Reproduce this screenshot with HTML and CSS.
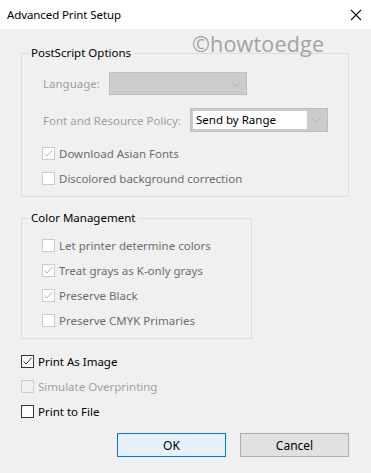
FILE: index.html
```html
<!DOCTYPE html>
<html lang="en">
<head>
  <meta charset="UTF-8">
  <title>Advanced Print Setup</title>
  <link rel="stylesheet" href="styles.css">
</head>
<body>
  <div class="dialog">
    <div class="titlebar">
      <span class="title">Advanced Print Setup</span>
      <svg class="close" width="12" height="12" viewBox="0 0 12 12">
        <path d="M1 1 L11 11 M11 1 L1 11" stroke="#111" stroke-width="1.1" fill="none"/>
      </svg>
    </div>
    <div class="content">
      <div class="watermark">©howtoedge</div>
      <fieldset class="group wide">
        <legend>PostScript Options</legend>
        <div class="field first">
          <span class="label">Language:</span>
          <div class="select empty">
            <span class="value"></span>
            <span class="arrow"><svg width="9" height="5" viewBox="0 0 9 5"><path d="M0.5 0.5 L4.5 4.5 L8.5 0.5" stroke="#b0b0b0" fill="none"/></svg></span>
          </div>
        </div>
        <div class="field policy">
          <span class="label">Font and Resource Policy:</span>
          <div class="select filled">
            <span class="value">Send by Range</span>
            <span class="arrow"><svg width="9" height="5" viewBox="0 0 9 5"><path d="M0.5 0.5 L4.5 4.5 L8.5 0.5" stroke="#b0b0b0" fill="none"/></svg></span>
          </div>
        </div>
        <div class="check-row disabled first-check">
          <span class="box checked"><svg width="11" height="11" viewBox="0 0 11 11"><path d="M1.5 5.5 L4 8 L9.5 2" stroke="#b5b5b5" fill="none"/></svg></span>
          <span>Download Asian Fonts</span>
        </div>
        <div class="check-row disabled">
          <span class="box"></span>
          <span>Discolored background correction</span>
        </div>
      </fieldset>

      <fieldset class="group narrow">
        <legend>Color Management</legend>
        <div class="check-row disabled">
          <span class="box"></span>
          <span>Let printer determine colors</span>
        </div>
        <div class="check-row disabled">
          <span class="box checked"><svg width="11" height="11" viewBox="0 0 11 11"><path d="M1.5 5.5 L4 8 L9.5 2" stroke="#b5b5b5" fill="none"/></svg></span>
          <span>Treat grays as K-only grays</span>
        </div>
        <div class="check-row disabled">
          <span class="box checked"><svg width="11" height="11" viewBox="0 0 11 11"><path d="M1.5 5.5 L4 8 L9.5 2" stroke="#b5b5b5" fill="none"/></svg></span>
          <span>Preserve Black</span>
        </div>
        <div class="check-row disabled">
          <span class="box"></span>
          <span>Preserve CMYK Primaries</span>
        </div>
      </fieldset>

      <div class="options">
        <div class="check-row">
          <span class="box checked"><svg width="11" height="11" viewBox="0 0 11 11"><path d="M1.5 5.5 L4 8 L9.5 2" stroke="#333" fill="none"/></svg></span>
          <span>Print As Image</span>
        </div>
        <div class="check-row off">
          <span class="box"></span>
          <span>Simulate Overprinting</span>
        </div>
        <div class="check-row">
          <span class="box"></span>
          <span>Print to File</span>
        </div>
      </div>

      <div class="buttons">
        <button class="btn default">OK</button>
        <button class="btn">Cancel</button>
      </div>
    </div>
  </div>
</body>
</html>
```

FILE: styles.css
```css
html, body {
  margin: 0;
  height: 100%;
}
body {
  font-family: 'Noto Sans', 'Open Sans', sans-serif;
  font-size: 11.5px;
  color: #000;
  background: #f0f0f0;
}
.dialog {
  width: 371px;
  height: 473px;
  display: flex;
  flex-direction: column;
}
.titlebar {
  height: 29px;
  background: #fff;
  display: flex;
  align-items: center;
  justify-content: space-between;
  padding: 0 9px 0 7px;
  flex-shrink: 0;
}
.title {
  letter-spacing: -0.1px;
}
.content {
  flex: 1;
  position: relative;
  padding: 16px 22px 0 21px;
}
.watermark {
  position: absolute;
  left: 192px;
  top: 0;
  font-family: 'Open Sans', sans-serif;
  font-size: 21.5px;
  color: #a3a3a3;
  letter-spacing: 0.2px;
}
.group {
  margin: 0;
  border: 1px solid #dcdcdc;
  padding: 0 0 5px 21px;
  min-width: 0;
  box-sizing: border-box;
}
.group legend {
  padding: 0 3px 0 2px;
  margin-left: -14px;
  line-height: 16px;
  height: 16px;
}
.wide {
  width: 328px;
}
.narrow {
  width: 231px;
  margin-top: 13px;
  padding-top: 7px;
}
.field {
  display: flex;
  align-items: center;
  color: #a0a0a0;
}
.field.first {
  margin-top: 11px;
}
.field.policy {
  margin-top: 13px;
}
.field .label {
  width: 66px;
}
.field.policy .label {
  width: 147px;
}
.select {
  display: flex;
  box-sizing: border-box;
  border: 1px solid #bfbfbf;
  background: #cccccc;
}
.select.empty {
  width: 138px;
  height: 23px;
}
.select.filled {
  width: 138px;
  height: 24px;
  padding: 2px;
}
.select .value {
  flex: 1;
}
.select.filled .value {
  background: #fff;
  color: #000;
  padding-left: 3px;
  line-height: 18px;
}
.arrow {
  width: 18px;
  display: flex;
  align-items: center;
  justify-content: center;
  padding-top: 1px;
}
.select.empty .arrow {
  width: 22px;
}
.check-row {
  display: flex;
  align-items: center;
  height: 25px;
}
.first-check {
  margin-top: 9px;
}
.box {
  width: 13px;
  height: 13px;
  box-sizing: border-box;
  border: 1px solid #333;
  background: #fff;
  margin-right: 4px;
  display: flex;
  align-items: center;
  justify-content: center;
  margin-left: -1px;
}
.check-row.disabled {
  color: #6d6d6d;
}
.check-row.disabled .box {
  border-color: #cccccc;
}
.check-row.off {
  color: #a0a0a0;
}
.check-row.off .box {
  border-color: #cccccc;
  background: #f0f0f0;
}
.options {
  margin-top: 10px;
}
.options .check-row .box {
  margin-left: 0;
}
.buttons {
  display: flex;
  justify-content: flex-end;
  gap: 14px;
  margin-top: 9px;
}
.btn {
  width: 109px;
  height: 24px;
  font-family: inherit;
  font-size: 12px;
  color: #000;
  background: #e1e1e1;
  border: 1px solid #adadad;
  padding: 0;
}
.btn.default {
  background: #e5f1fb;
  border-color: #0078d7;
}
```
